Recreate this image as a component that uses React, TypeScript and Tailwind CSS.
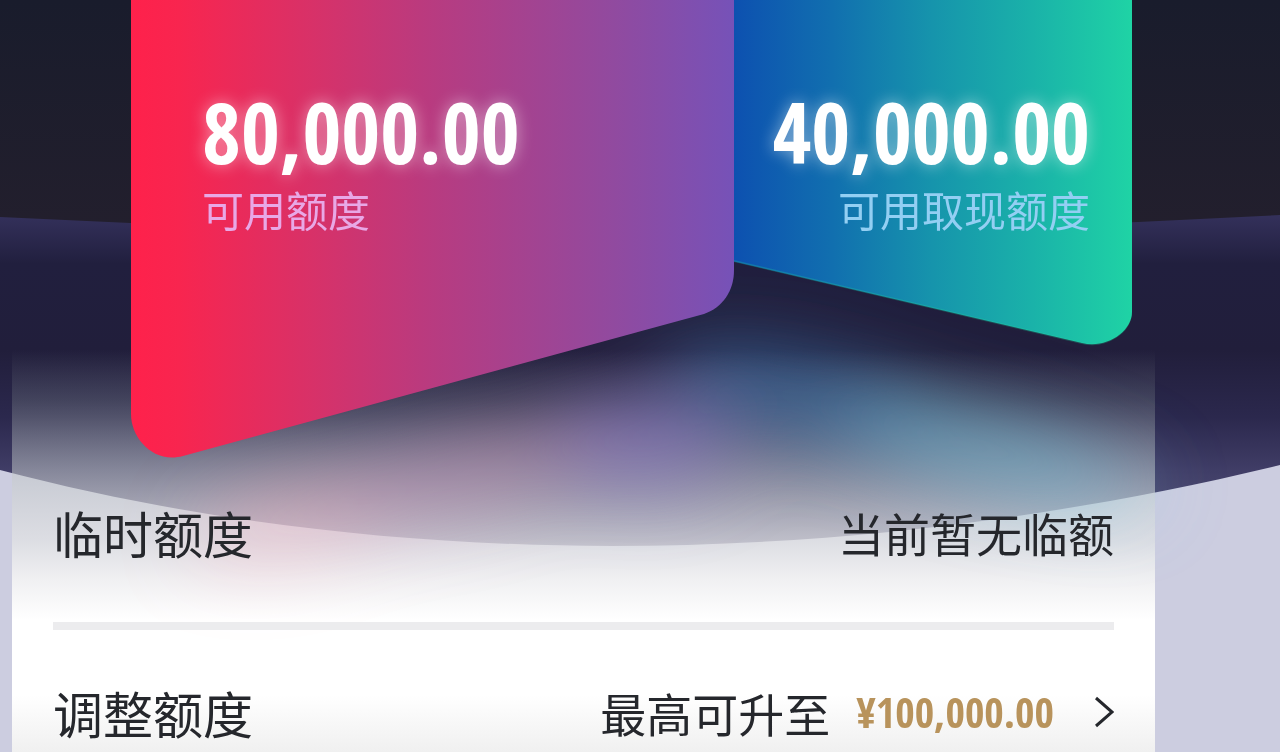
import type { ReactNode } from 'react';

interface CreditCardProps {
  amount: string;
  label: string;
  className: string;
  labelClassName: string;
  children: ReactNode;
}

function CreditCard({ amount, label, className, labelClassName, children }: CreditCardProps) {
  return (
    <article className={`relative flex flex-col pt-20 ${className}`}>
      {children}
      <p className="relative font-['Open_Sans_Condensed','Noto_Sans_ExtraCondensed','Roboto_Condensed',sans-serif] text-[84px] leading-[104px] font-bold whitespace-nowrap text-white [text-shadow:0_0_16px_rgba(255,255,255,0.5)]">
        {amount}
      </p>
      <p className={`relative text-[42px] leading-[50px] whitespace-nowrap ${labelClassName}`}>
        {label}
      </p>
    </article>
  );
}

function Backdrop() {
  return (
    <svg
      className="absolute inset-0 h-full w-full"
      viewBox="0 0 1280 752"
      preserveAspectRatio="none"
      aria-hidden="true"
    >
      <defs>
        <linearGradient id="sky" x1="0" y1="0" x2="0" y2="1">
          <stop offset="0" stopColor="#191c2c" />
          <stop offset="1" stopColor="#231f2d" />
        </linearGradient>
        <linearGradient id="ground" gradientUnits="userSpaceOnUse" x1="0" y1="217" x2="0" y2="550">
          <stop offset="0" stopColor="#33305a" />
          <stop offset="0.14" stopColor="#211f3e" />
          <stop offset="0.4" stopColor="#211e3b" />
          <stop offset="0.6" stopColor="#2b284d" />
          <stop offset="0.76" stopColor="#403d66" />
          <stop offset="1" stopColor="#5a577d" />
        </linearGradient>
      </defs>
      <rect width="1280" height="240" fill="url(#sky)" />
      <path d="M0 217 Q640 250 1280 215 V560 H0Z" fill="url(#ground)" />
      <path d="M0 470 C380 570 830 574 1280 465 V752 H0Z" fill="#cccde0" />
    </svg>
  );
}

function Glow() {
  return (
    <svg
      className="absolute inset-0 h-full w-full"
      viewBox="0 0 1280 752"
      preserveAspectRatio="none"
      aria-hidden="true"
    >
      <defs>
        <filter id="soft" x="-50%" y="-80%" width="200%" height="260%">
          <feGaussianBlur stdDeviation="38" />
        </filter>
      </defs>
      <g filter="url(#soft)">
        <ellipse cx="290" cy="520" rx="100" ry="34" fill="#ff9fb4" opacity="0.36" transform="rotate(-12 290 520)" />
        <ellipse cx="470" cy="472" rx="150" ry="34" fill="#d48ab4" opacity="0.42" transform="rotate(-14 470 472)" />
        <ellipse cx="645" cy="440" rx="90" ry="46" fill="#9078cc" opacity="0.55" />
        <ellipse cx="800" cy="396" rx="140" ry="38" fill="#3f80b8" opacity="0.66" transform="rotate(12 800 396)" />
        <ellipse cx="980" cy="448" rx="140" ry="34" fill="#6cbcd6" opacity="0.65" transform="rotate(14 980 448)" />
        <ellipse cx="1110" cy="485" rx="50" ry="26" fill="#78d0ee" opacity="0.25" />
      </g>
    </svg>
  );
}

export default function App() {
  return (
    <main className="relative min-h-screen overflow-hidden bg-[#cccde0] font-['Noto_Sans_CJK_SC',sans-serif] text-[#25272c]">
      <Backdrop />

      <div className="absolute inset-x-0 top-[350px] bottom-0 mr-[125px] ml-3 bg-[linear-gradient(to_bottom,rgba(120,120,110,0)_0,rgba(135,145,145,0.28)_50px,rgba(190,196,196,0.52)_115px,rgba(226,227,228,0.74)_190px,rgba(244,244,244,0.9)_230px,white_270px,white_345px,#f0f0f0_402px)]" />
      <Glow />

      <section className="relative grid grid-cols-[603fr_398fr] items-start pr-[148px] pl-[131px]">
        <CreditCard
          amount="80,000.00"
          label="可用额度"
          className="z-10 h-[460px] pl-[71px]"
          labelClassName="text-[#e8a8e6]"
        >
          <svg
            className="absolute inset-0 h-full w-full"
            viewBox="0 0 603 460"
            preserveAspectRatio="none"
            aria-hidden="true"
          >
            <defs>
              <linearGradient id="redCard" x1="0" y1="0" x2="1" y2="0">
                <stop offset="0" stopColor="#ff214b" />
                <stop offset="0.08" stopColor="#f8254f" />
                <stop offset="0.3" stopColor="#d83168" />
                <stop offset="0.5" stopColor="#b83b80" />
                <stop offset="0.8" stopColor="#914a9f" />
                <stop offset="1" stopColor="#7652b8" />
              </linearGradient>
            </defs>
            <path
              d="M0 0 H603 V270 C603 291 592 307 573 314 L52 456 C22 464 0 438 0 414Z"
              fill="url(#redCard)"
            />
          </svg>
        </CreditCard>
        <CreditCard
          amount="40,000.00"
          label="可用取现额度"
          className="h-[346px] items-end pr-[42px]"
          labelClassName="text-[#93cff3]"
        >
          <svg
            className="absolute inset-0 h-full w-full"
            viewBox="0 0 398 346"
            preserveAspectRatio="none"
            aria-hidden="true"
          >
            <defs>
              <linearGradient id="blueCard" x1="0" y1="0" x2="1" y2="0">
                <stop offset="0" stopColor="#0d50b0" />
                <stop offset="0.25" stopColor="#116faf" />
                <stop offset="0.5" stopColor="#1694ac" />
                <stop offset="0.75" stopColor="#1ab2a9" />
                <stop offset="1" stopColor="#1fd3a5" />
              </linearGradient>
            </defs>
            <path d="M-2 0 H398 V312 C398 332 372 349 348 343 L-2 261Z" fill="url(#blueCard)" />
            <path
              d="M0 261 L348 343 C372 349 397 332 397 312 V0"
              fill="none"
              stroke="#20dda5"
              strokeWidth="2"
              opacity="0.25"
            />
          </svg>
        </CreditCard>
      </section>

      <section className="relative mr-[166px] ml-[53px]">
        <div className="flex items-center justify-between border-b-8 border-[#ececee] pt-8 pb-[50px]">
          <h2 className="text-[50px] leading-20">临时额度</h2>
          <span className="text-[46px] leading-20">当前暂无临额</span>
        </div>
        <a href="#adjust" className="flex items-center pt-[42px]">
          <h2 className="flex-1 text-[50px] leading-20">调整额度</h2>
          <span className="text-[46px] leading-20">最高可升至</span>
          <span className="ml-[26px] font-['Open_Sans_Condensed','Noto_Sans_ExtraCondensed','Roboto_Condensed',sans-serif] text-[42px] leading-20 font-bold text-[#b8935c]">
            ¥100,000.00
          </span>
          <svg className="ml-10 h-8 w-5" viewBox="0 0 20 32" fill="none" aria-hidden="true">
            <path d="M2 2 L18 16 L2 30" stroke="#25272c" strokeWidth="3" />
          </svg>
        </a>
      </section>
    </main>
  );
}
